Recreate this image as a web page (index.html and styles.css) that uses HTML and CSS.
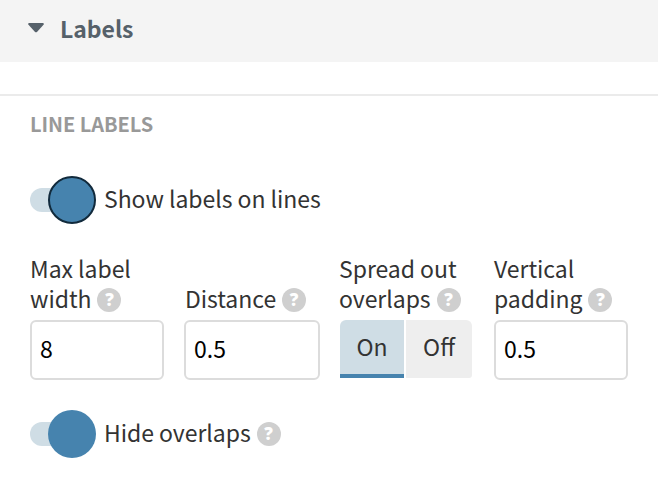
FILE: index.html
```
<!DOCTYPE html>
<html lang="en">
<head>
  <meta charset="UTF-8">
  <title>Labels</title>
  <link rel="stylesheet" href="styles.css">
</head>
<body>
  <div class="settings-header">
    <svg class="arrow" width="16" height="10" viewBox="0 0 16 10"><path d="M1 0h14q1.5 0.6 0.5 1.8L9.2 8.7q-1.2 1-2.4 0L0.5 1.8Q-0.5 0.6 1 0z"/></svg>
    <span class="header-title">Labels</span>
  </div>
  <div class="settings-body">
    <div class="subhead">LINE LABELS</div>

    <div class="switch-row">
      <span class="switch focused"><span class="track"></span><span class="knob"></span></span>
      <span class="switch-label">Show labels on lines</span>
    </div>

    <div class="options">
      <div class="option">
        <label class="name" for="max-width">Max label<br>width<span class="help">?</span></label>
        <input id="max-width" type="text" value="8">
      </div>
      <div class="option distance">
        <label class="name" for="distance">Distance<span class="help">?</span></label>
        <input id="distance" type="text" value="0.5">
      </div>
      <div class="option spread">
        <div class="name">Spread out<br>overlaps<span class="help">?</span></div>
        <div class="buttons">
          <button class="selected">On</button>
          <button>Off</button>
        </div>
      </div>
      <div class="option">
        <label class="name" for="padding">Vertical<br>padding<span class="help">?</span></label>
        <input id="padding" type="text" value="0.5">
      </div>
    </div>

    <div class="switch-row">
      <span class="switch"><span class="track"></span><span class="knob"></span></span>
      <span class="switch-label">Hide overlaps<span class="help">?</span></span>
    </div>
  </div>
</body>
</html>
```
FILE: styles.css
```
* { box-sizing: border-box; }
body { margin: 0; background: #fff; color: #333; font-family: "Noto Sans CJK SC", "Noto Sans", sans-serif; font-size: 23px; letter-spacing: -0.04px; line-height: 30px; }

.settings-header { display: flex; align-items: center; height: 62px; padding: 0 28px 6px; background: #f4f4f4; color: #56616a; }
.arrow { fill: #56616a; margin-right: 16px; }
.header-title { font-weight: bold; }

.settings-body { margin-top: 32px; padding: 14px 30px 0; border-top: 2px solid #ebebeb; }
.subhead { height: 66px; font-size: 20px; font-weight: bold; line-height: 28px; color: #999; }

.switch-row { display: flex; align-items: center; height: 48px; }
.switch { position: relative; width: 66px; height: 48px; margin-right: 8px; }
.track { position: absolute; top: 12px; left: 0; width: 48px; height: 24px; border-radius: 12px; background: #cfdde5; }
.knob { position: absolute; top: 0; left: 18px; width: 48px; height: 48px; border-radius: 50%; background: #4683ae; }
.focused .knob { border: 2px solid #112a3c; }
.switch-label { padding-bottom: 4px; }

.help { display: inline-block; width: 24px; height: 24px; margin: 5px 0 0 6px; border-radius: 50%; background: #cfcfcf; color: #fff; font-family: "Open Sans", sans-serif; font-size: 17px; font-weight: 800; line-height: 24px; text-align: center; vertical-align: top; }

.options { display: grid; grid-template-columns: 134px 136px 134px 134px; gap: 20px; margin: 29px 0 30px; }
.option { display: flex; flex-direction: column; height: 127px; }
.name { flex: 1; align-content: end; padding-bottom: 7px; white-space: nowrap; }
.distance .name { margin-left: 1px; }
.spread .name { margin-left: -1px; }
input { display: block; width: 100%; height: 60px; margin: 0; padding: 0 8px 5px; border: 2px solid #dcdcdc; border-radius: 6px; background: #fff; color: #000; font: inherit; }
.buttons { display: flex; gap: 2px; height: 60px; }
button { width: 66px; height: 58px; margin: 0; padding: 0 0 7px; border: 0; border-radius: 0 6px 3px 0; background: #eee; color: #333; font: inherit; }
.selected { width: 64px; padding-bottom: 3px; border-bottom: 4px solid #4683ae; border-radius: 6px 0 0 0; background: #cfdde5; }
```
